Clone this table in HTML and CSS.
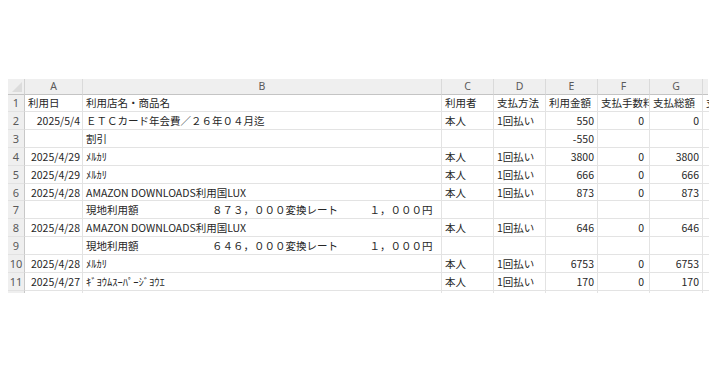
FILE: index.html
```html
<!DOCTYPE html>
<html lang="ja">
<head>
<meta charset="utf-8">
<title>Sheet</title>
<link rel="stylesheet" href="styles.css">
</head>
<body>
<div class="sheet">
  <div class="corner"><span class="tri"></span></div>
  <div class="ch">A</div><div class="ch">B</div><div class="ch">C</div><div class="ch">D</div><div class="ch">E</div><div class="ch">F</div><div class="ch">G</div><div class="ch last"></div>

  <div class="rh">1</div>
  <div class="c">利用日</div><div class="c">利用店名・商品名</div><div class="c">利用者</div><div class="c">支払方法</div><div class="c">利用金額</div><div class="c">支払手数料</div><div class="c">支払総額</div><div class="c last">支払</div>

  <div class="rh">2</div>
  <div class="c r da">2025/5/4</div><div class="c">ＥＴＣカード年会費／２６年０４月迄</div><div class="c">本人</div><div class="c">1回払い</div><div class="c r">550</div><div class="c r f">0</div><div class="c r">0</div><div class="c last"></div>

  <div class="rh">3</div>
  <div class="c"></div><div class="c">割引</div><div class="c"></div><div class="c"></div><div class="c r">-550</div><div class="c"></div><div class="c"></div><div class="c last"></div>

  <div class="rh">4</div>
  <div class="c r da">2025/4/29</div><div class="c">ﾒﾙｶﾘ</div><div class="c">本人</div><div class="c">1回払い</div><div class="c r">3800</div><div class="c r f">0</div><div class="c r">3800</div><div class="c last"></div>

  <div class="rh">5</div>
  <div class="c r da">2025/4/29</div><div class="c">ﾒﾙｶﾘ</div><div class="c">本人</div><div class="c">1回払い</div><div class="c r">666</div><div class="c r f">0</div><div class="c r">666</div><div class="c last"></div>

  <div class="rh">6</div>
  <div class="c r da">2025/4/28</div><div class="c">AMAZON DOWNLOADS利用国LUX</div><div class="c">本人</div><div class="c">1回払い</div><div class="c r">873</div><div class="c r f">0</div><div class="c r">873</div><div class="c last"></div>

  <div class="rh">7</div>
  <div class="c"></div><div class="c pre">現地利用額　　　　　　　８７３，０００変換レート　　　１，０００円</div><div class="c"></div><div class="c"></div><div class="c"></div><div class="c"></div><div class="c"></div><div class="c last"></div>

  <div class="rh">8</div>
  <div class="c r da">2025/4/28</div><div class="c">AMAZON DOWNLOADS利用国LUX</div><div class="c">本人</div><div class="c">1回払い</div><div class="c r">646</div><div class="c r f">0</div><div class="c r">646</div><div class="c last"></div>

  <div class="rh">9</div>
  <div class="c"></div><div class="c pre">現地利用額　　　　　　　６４６，０００変換レート　　　１，０００円</div><div class="c"></div><div class="c"></div><div class="c"></div><div class="c"></div><div class="c"></div><div class="c last"></div>

  <div class="rh">10</div>
  <div class="c r da">2025/4/28</div><div class="c">ﾒﾙｶﾘ</div><div class="c">本人</div><div class="c">1回払い</div><div class="c r">6753</div><div class="c r f">0</div><div class="c r">6753</div><div class="c last"></div>

  <div class="rh">11</div>
  <div class="c r da">2025/4/27</div><div class="c">ｷﾞﾖｳﾑｽｰﾊﾟｰｼﾞﾖｳｴ</div><div class="c">本人</div><div class="c">1回払い</div><div class="c r">170</div><div class="c r f">0</div><div class="c r">170</div><div class="c last"></div>

  <div class="rh stub"></div>
  <div class="c stub"></div><div class="c stub"></div><div class="c stub"></div><div class="c stub"></div><div class="c stub"></div><div class="c stub"></div><div class="c stub"></div><div class="c stub last"></div>
</div>
</body>
</html>
```

FILE: styles.css
```css
html, body {
  margin: 0;
  padding: 0;
  background: #ffffff;
}

.sheet {
  margin: 79px 0 0 8px;
  width: 700px;
  display: grid;
  grid-template-columns: 17px 58px 359px 52px 52px 52px 52px 53px 5px;
  grid-template-rows: 15.5px repeat(11, 17.84px) 2.5px;
  font-family: "Noto Sans CJK JP", "Noto Sans", sans-serif;
  font-size: 10.5px;
  color: #262626;
}

.sheet > div {
  box-sizing: border-box;
  overflow: hidden;
  white-space: nowrap;
  display: flex;
  align-items: center;
}

.corner {
  background: #efefef;
  border-right: 1px solid #d2d2d2;
  border-bottom: 1px solid #c4c4c4;
  position: relative;
}

.tri {
  position: absolute;
  right: 2px;
  bottom: 2px;
  width: 0;
  height: 0;
  border-style: solid;
  border-width: 0 0 10px 10px;
  border-color: transparent transparent #dcdcdc transparent;
}

.ch {
  background: #efefef;
  border-right: 1px solid #dadada;
  border-bottom: 1px solid #c4c4c4;
  justify-content: center;
  color: #5a5a5a;
  font-family: "Noto Sans", "Noto Sans CJK JP", sans-serif;
  font-size: 10.5px;
}

.rh {
  background: #efefef;
  border-right: 1px solid #c8c8c8;
  border-bottom: 1px solid #e2e2e2;
  justify-content: center;
  color: #5a5a5a;
  font-family: "Noto Sans", "Noto Sans CJK JP", sans-serif;
  font-size: 11px;
}

.c {
  border-right: 1px solid #e3e3e3;
  border-bottom: 1px solid #e3e3e3;
  padding: 0 3px 0 3px;
}

.c.r {
  justify-content: flex-end;
  padding-right: 3px;
}

.c.f {
  padding-right: 5px;
}

.c.da {
  padding-right: 2px;
}

.pre {
  white-space: pre;
}

.last {
  border-right: none;
}

.stub {
  border-bottom: none;
}
```
